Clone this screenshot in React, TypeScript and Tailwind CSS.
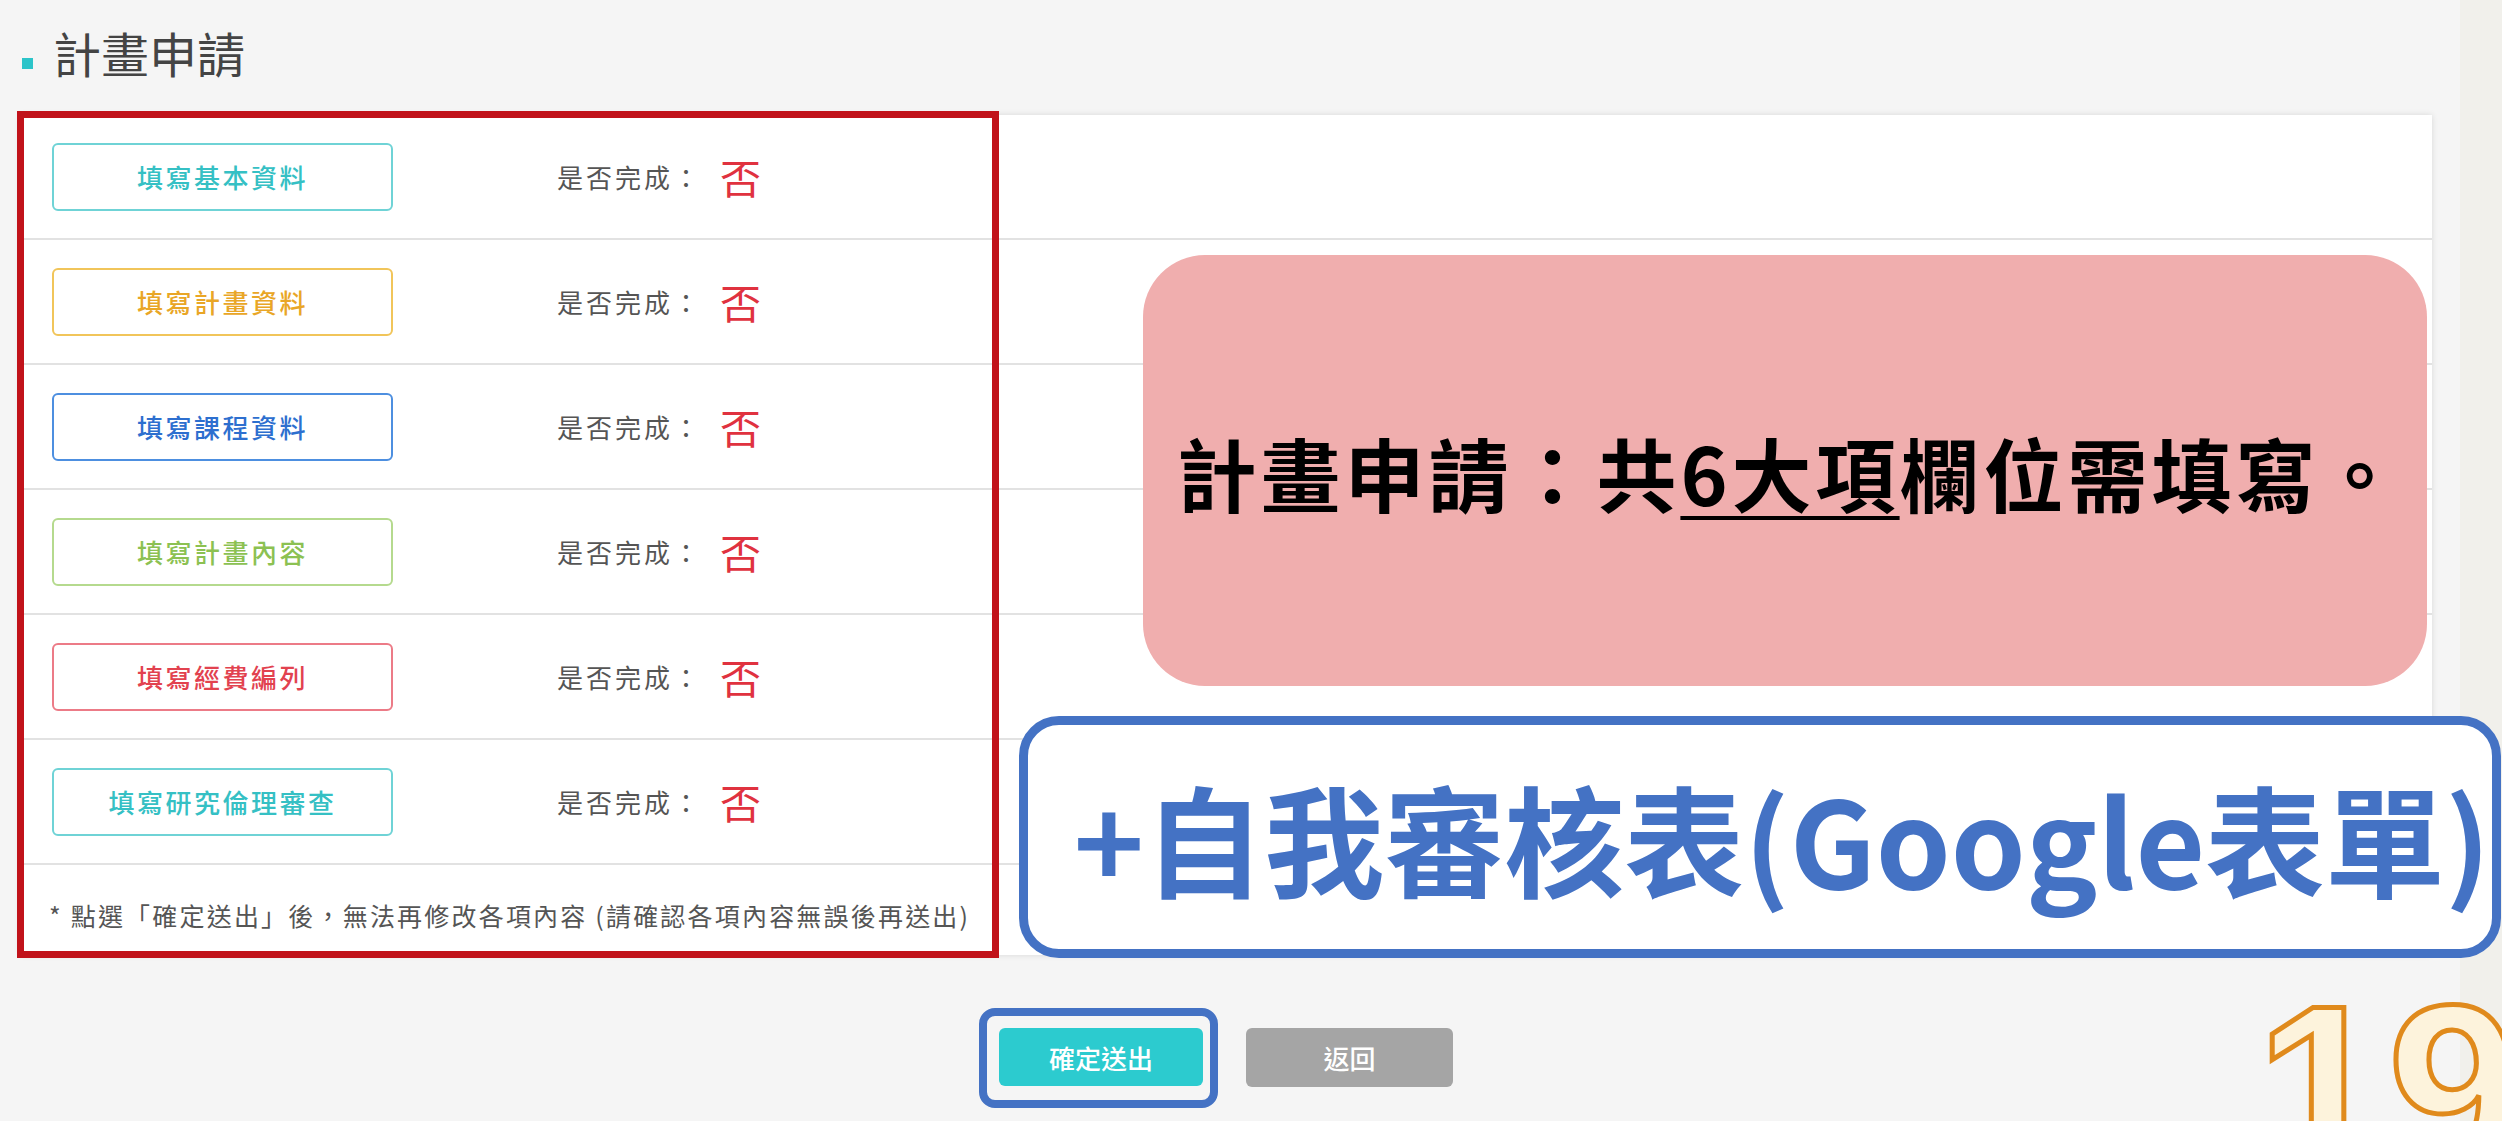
import React from 'react';

const items = [
  { label: '填寫基本資料', cls: 'text-[#35c0c4] border-[#6fd3d6]' },
  { label: '填寫計畫資料', cls: 'text-[#e9a626] border-[#f1c55a]' },
  { label: '填寫課程資料', cls: 'text-[#2d6fcf] border-[#4d8fe0]' },
  { label: '填寫計畫內容', cls: 'text-[#8cc152] border-[#b5da8e]' },
  { label: '填寫經費編列', cls: 'text-[#e2424f] border-[#ec7b87]' },
  { label: '填寫研究倫理審查', cls: 'text-[#35c0c4] border-[#6fd3d6]' },
];

const App: React.FC = () => {
  return (
    <div className="relative flex h-[1121px] w-full overflow-hidden bg-[#f5f5f5] font-['Noto_Sans_CJK_TC','Noto_Sans',sans-serif]">
      <main className="flex-1 pl-[20px] pr-[28px] pt-[28px]">
        <h1 className="flex items-start">
          <span className="ml-[2px] mt-[30px] h-[11px] w-[11px] bg-[#2cc4c9]" />
          <span className="ml-[20px] text-[48px] font-normal leading-none text-[#444]">計畫申請</span>
        </h1>

        <div className="relative mt-[39px] bg-white shadow-[0_0_6px_rgba(0,0,0,0.12)]">
          {items.map((item) => (
            <div key={item.label} className="flex h-[125px] items-center border-b-2 border-[#e2e2e2] pl-[32px]">
              <button
                className={`flex h-[68px] w-[341px] items-center justify-center rounded-[6px] border-2 bg-white text-[26px] font-medium tracking-[2.5px] ${item.cls}`}
              >
                {item.label}
              </button>
              <span className="ml-[164px] text-[26px] tracking-[3px] text-[#555]">是否完成：</span>
              <span className="ml-[18px] text-[41px] leading-none text-[#e0323f]">否</span>
            </div>
          ))}
          <div className="h-[90px] pl-[29px] pt-[38px] text-[25px] leading-none tracking-[2.2px] text-[#555]">
            * 點選「確定送出」後，無法再修改各項內容 (請確認各項內容無誤後再送出)
          </div>

          {/* annotations */}
          <div className="absolute left-[-3px] top-[-4px] h-[847px] w-[982px] border-[7px] border-[#c1121a]" />
          <div className="absolute left-[1123px] top-[140px] flex h-[431px] w-[1284px] items-center justify-center rounded-[62px] bg-[#f0aeae] pl-[10px]">
            <p className="text-[80px] font-bold leading-none tracking-[4px] text-black">
              計畫申請：共<span className="underline decoration-[4px] underline-offset-[10px]">6大項</span>欄位需填寫。
            </p>
          </div>
          <div className="absolute left-[999px] top-[601px] flex h-[242px] w-[1482px] items-center justify-center rounded-[40px] border-[9px] border-[#4472c4] bg-white pl-[44px]">
            <p className="text-[120px] font-bold leading-none text-[#4472c4]">+自我審核表(Google表單)</p>
          </div>
        </div>

        <div className="mt-[73px] flex justify-center gap-[43px]">
          <div className="relative">
            <button className="flex h-[58px] w-[204px] items-center justify-center rounded-[6px] bg-[#2ccbcf] text-[26px] font-medium text-white">
              確定送出
            </button>
            <span className="absolute -bottom-[21px] -left-[20px] -right-[15px] -top-[20px] rounded-[16px] border-[8px] border-[#4472c4]" />
          </div>
          <button className="flex h-[59px] w-[207px] items-center justify-center rounded-[6px] bg-[#a5a5a5] text-[26px] font-medium text-white">
            返回
          </button>
        </div>
      </main>
      <aside className="w-[42px] bg-[#f1f0eb]" />

      <div className="absolute left-[2256px] top-[970px] text-[237px] font-bold leading-none text-[#fdf3dc] [font-family:'Liberation_Sans',Arial,sans-serif] [-webkit-text-stroke:5px_#e08a1c]">
        19
      </div>
    </div>
  );
};

export default App;
